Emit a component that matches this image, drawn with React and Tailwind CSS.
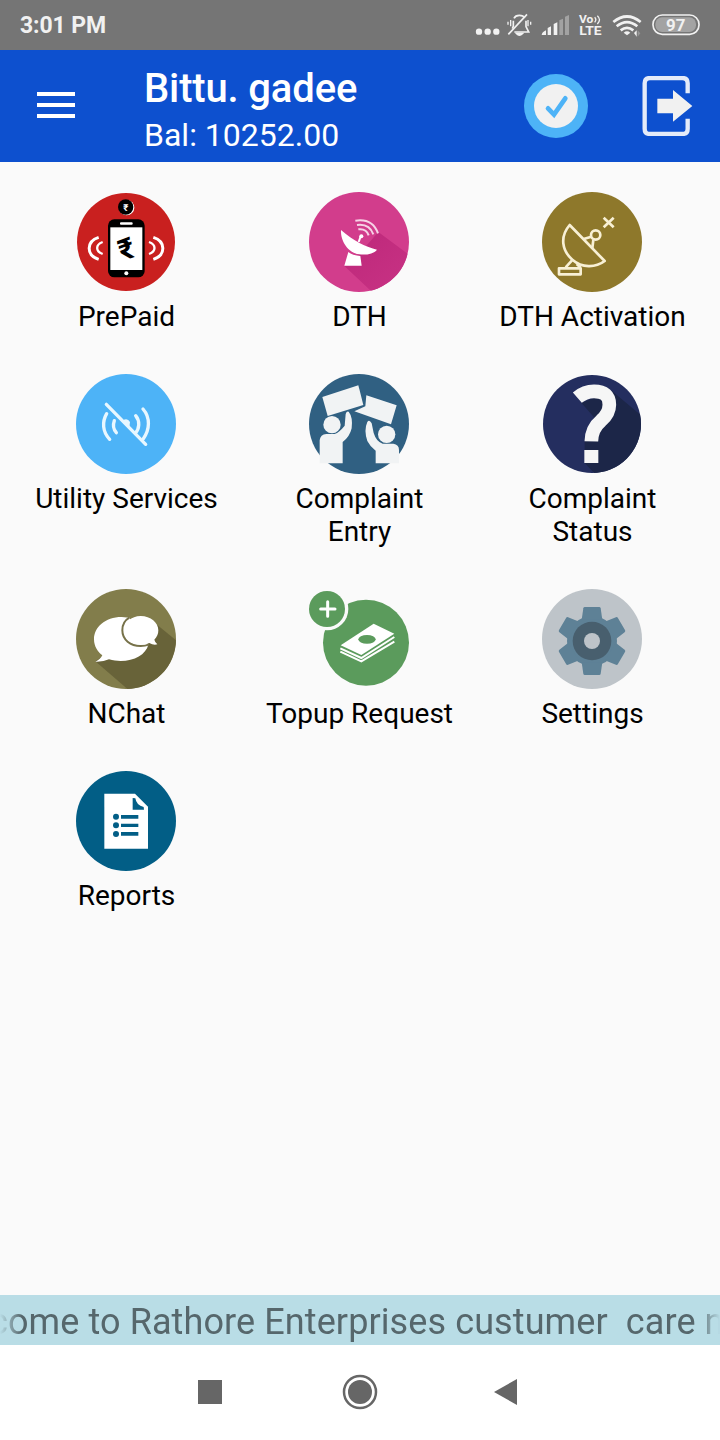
function PrepaidIcon() {
  return (
    <svg viewBox="30 30 300 300" className="size-[100px]">
      <circle cx="180" cy="180" r="147" fill="#c9201f" />
      <circle cx="182" cy="77" r="23" fill="#fff" />
      <circle cx="179" cy="75" r="23" fill="#000" />
      <text x="179" y="86" textAnchor="middle" fontSize="29" fontWeight="700" fill="#fff" className="font-['Roboto',sans-serif]">₹</text>
      <rect x="126" y="112" width="110" height="174" rx="19" fill="#000" />
      <rect x="162" y="121" width="38" height="7" rx="3" fill="#fff" />
      <rect x="133" y="136" width="96" height="128" fill="#fff" />
      <circle cx="181" cy="274" r="6" fill="#fff" />
      <text x="181" y="232" textAnchor="middle" fontSize="88" fontWeight="700" fill="#000" transform="rotate(-20 180 200)" className="font-['Roboto',sans-serif]">₹</text>
      <g fill="none" stroke="#fff">
        <path d="M98 166C60 178 60 220 98 232" strokeWidth="9" />
        <path d="M110 180C88 188 88 208 110 216" strokeWidth="7" />
        <path d="M262 166C300 178 300 220 262 232" strokeWidth="9" />
        <path d="M249 180C271 188 271 208 249 216" strokeWidth="7" />
      </g>
    </svg>
  );
}

function DthIcon() {
  return (
    <svg viewBox="30 30 300 300" className="size-[100px]">
      <defs>
        <clipPath id="dth-clip">
          <circle cx="180" cy="180" r="150" />
        </clipPath>
        <linearGradient id="dth-shade" x1="0" y1="0" x2="1" y2="1">
          <stop offset="0.2" stopColor="#bf2a7c" />
          <stop offset="1" stopColor="#c93385" />
        </linearGradient>
      </defs>
      <circle cx="180" cy="180" r="150" fill="#d23d8c" />
      <path d="M238 150L340 226V340H230L136 252L190 205Z" fill="url(#dth-shade)" clipPath="url(#dth-clip)" />
      <path d="M126 144C124 178 148 212 180 217C202 220 224 215 234 203C202 196 162 176 126 144Z" fill="#fff" />
      <path d="M148 210Q160 220 184 222L188 251H136Z" fill="#fff" />
      <path d="M179 180L186 160" stroke="#fff" strokeWidth="6" />
      <circle cx="187" cy="163" r="6" fill="#fff" />
      <g fill="none" stroke="#f6d3e6" strokeWidth="6">
        <path d="M169 116Q220 108 237 154" />
        <path d="M174 129Q211 124 223 157" />
        <path d="M178 142Q202 139 209 160" />
      </g>
    </svg>
  );
}

function DthActivationIcon() {
  return (
    <svg viewBox="30 30 300 300" className="size-[100px]">
      <circle cx="180" cy="180" r="150" fill="#8e782b" />
      <g fill="none" stroke="#f8f0d5" strokeWidth="8" strokeLinejoin="round">
        <path d="M113 129L218 237C190 258 150 258 121 233C91 207 82 165 113 129Z" />
        <path d="M155 171L178 164M184 174L181 198" />
        <circle cx="191" cy="159" r="14" />
        <path d="M120 235L101 256M134 246L146 257" />
        <rect x="81" y="259" width="65" height="18" />
        <path d="M215 107L245 136M245 107L215 136" />
      </g>
    </svg>
  );
}

function UtilityIcon() {
  return (
    <svg viewBox="30 30 300 300" className="size-[100px]">
      <circle cx="180" cy="180" r="150" fill="#4db3f7" />
      <g fill="none" stroke="#e8f7ff" strokeWidth="10" strokeLinecap="round">
        <path d="M121 121L239 241" />
        <path d="M122 149C108 173 109 203 131 226" />
        <path d="M145 170C140 184 142 196 151 206" />
        <path d="M231 135C254 161 251 198 232 224" />
        <path d="M209 155C223 172 220 194 208 208" />
      </g>
      <path d="M170 170Q184 160 192 174L190 190Z" fill="#e8f7ff" />
    </svg>
  );
}

function ComplaintEntryIcon() {
  return (
    <svg viewBox="30 30 300 300" className="size-[100px]">
      <circle cx="180" cy="180" r="150" fill="#306082" />
      <g fill="#f1f3f4">
        <path d="M70 99L178 64L193 123L86 156Z" />
        <path d="M202 94L293 124L276 181L166 142L199 127Z" />
        <circle cx="99" cy="182" r="26" />
        <path d="M62 298V229Q64 211 82 210H107Q121 205 137 185L140 150Q142 140 149 143Q162 159 158 193Q152 219 131 234V298Z" />
        <circle cx="263" cy="211" r="26" />
        <path d="M300 298V258Q300 241 283 239H251Q232 233 224 207L218 178Q211 165 205 174Q194 198 205 231Q214 249 230 260V298Z" />
      </g>
    </svg>
  );
}

function ComplaintStatusIcon() {
  return (
    <svg viewBox="30 30 300 300" className="size-[100px]">
      <defs>
        <clipPath id="status-clip">
          <circle cx="180" cy="180" r="147" />
        </clipPath>
      </defs>
      <circle cx="180" cy="180" r="147" fill="#242e5f" />
      <path d="M239 80L340 165V340H199L158 297V220L186 160L148 116Z" fill="#1c2648" clipPath="url(#status-clip)" />
      <path d="M136 101Q158 82 186 82Q232 82 232 122Q232 148 207 170Q179 193 178 232" fill="none" stroke="#f6f6f6" strokeWidth="41" />
      <rect x="157" y="258" width="42" height="39" fill="#f6f6f6" />
    </svg>
  );
}

function ChatIcon() {
  return (
    <svg viewBox="30 30 300 300" className="size-[100px]">
      <defs>
        <clipPath id="chat-clip">
          <circle cx="180" cy="180" r="150" />
        </clipPath>
      </defs>
      <circle cx="180" cy="180" r="150" fill="#827d4b" />
      <path d="M262 128L350 200V340H196L88 247L200 170Z" fill="#686339" clipPath="url(#chat-clip)" />
      <path d="M167 114C117 114 84 145 84 181C84 203 96 219 109 229Q104 240 88 248Q112 249 129 241C184 256 238 234 247 197L190 116Z" fill="#fff" />
      <path d="M190 116C176 124 169 138 169 154C169 182 193 201 224 201Q238 201 248 197" fill="none" stroke="#77724a" strokeWidth="6" />
      <path d="M224 111C196 111 174 131 174 154C174 178 195 197 224 197Q239 197 250 192Q262 199 274 196Q267 190 265 182C273 173 277 166 277 154C277 131 254 111 224 111Z" fill="#fff" />
    </svg>
  );
}

function TopupIcon() {
  return (
    <svg viewBox="30 30 300 300" className="size-[100px]">
      <circle cx="201" cy="191" r="129" fill="#5b9b5c" />
      <circle cx="84" cy="90" r="64" fill="#fafafa" />
      <circle cx="84" cy="90" r="54" fill="#5b9b5c" />
      <path d="M65 90H108M86 68V112" stroke="#fff" strokeWidth="9" strokeLinecap="round" />
      <path d="M125 199L224 134L286 164L187 228Z" fill="#fff" />
      <g fill="none" stroke="#fff" strokeWidth="6">
        <path d="M124 208L187 237L286 174" />
        <path d="M124 218L187 247L286 188" />
      </g>
      <ellipse cx="204" cy="181" rx="26" ry="13" fill="#5b9b5c" />
    </svg>
  );
}

const teeth = [0, 60, 120, 180, 240, 300];

function SettingsIcon() {
  return (
    <svg viewBox="30 30 300 300" className="size-[100px]">
      <circle cx="180" cy="180" r="150" fill="#bec4c9" />
      <g fill="#5e8196">
        <circle cx="180" cy="186" r="75" />
        {teeth.map((deg) => (
          <path key={deg} d="M158 84H202Q205 84 206 88L211 122H149L154 88Q155 84 158 84Z" transform={`rotate(${deg} 180 186)`} />
        ))}
      </g>
      <circle cx="180" cy="186" r="58" fill="#485f6e" />
      <circle cx="180" cy="186" r="24" fill="#bec4c9" />
    </svg>
  );
}

function ReportsIcon() {
  return (
    <svg viewBox="30 30 300 300" className="size-[100px]">
      <circle cx="180" cy="180" r="150" fill="#025e86" />
      <path d="M115 98H207L246 137V263H115Z" fill="#fff" />
      <path d="M200 111L208 112Q211 133 233 138L234 146H200Z" fill="#025e86" />
      <g fill="#025e86">
        <circle cx="150" cy="167" r="9" />
        <circle cx="150" cy="193" r="9" />
        <circle cx="150" cy="219" r="9" />
        <path d="M165 162H217V173H165ZM165 188H217V198H165ZM165 213H217V224H165Z" />
      </g>
    </svg>
  );
}

const menu = [
  { label: "PrePaid", Icon: PrepaidIcon },
  { label: "DTH", Icon: DthIcon },
  { label: "DTH Activation", Icon: DthActivationIcon },
  { label: "Utility Services", Icon: UtilityIcon },
  { label: "Complaint Entry", Icon: ComplaintEntryIcon },
  { label: "Complaint Status", Icon: ComplaintStatusIcon },
  { label: "NChat", Icon: ChatIcon },
  { label: "Topup Request", Icon: TopupIcon },
  { label: "Settings", Icon: SettingsIcon },
  { label: "Reports", Icon: ReportsIcon },
];

function StatusBar() {
  return (
    <div className="h-[50px] shrink-0 bg-[#757575] flex items-center justify-between pl-5 pr-[15px]">
      <span className="text-[23px] leading-[28px] mt-0.5 font-bold tracking-[-0.1px] text-[#f1f1f1]">3:01 PM</span>

      <div className="flex">
        {/* More */}
        <svg viewBox="39 0 90 150" className="w-[30px] h-[50px]" fill="#f1f1f1">
          <circle cx="57" cy="95" r="9.5" />
          <circle cx="83" cy="95" r="9.5" />
          <circle cx="109" cy="95" r="9.5" />
        </svg>

        {/* Muted */}
        <svg viewBox="129 0 96 150" className="w-8 h-[50px]" fill="none" stroke="#f1f1f1" strokeWidth="5">
          <path d="M162 55Q166 46 178 46Q190 46 194 54M198 62V80L206 96H163M157 86L160 78V62" />
          <path d="M145 103L201 43" />
          <path d="M170 101Q178 110 187 101Z" fill="#f1f1f1" />
          <path d="M152 60V79M204 60V79M144 65V74M212 65V74" strokeWidth="4" />
        </svg>

        {/* Signal */}
        <svg viewBox="225 0 120 150" className="w-10 h-[50px]" fill="#f1f1f1">
          <path d="M245 105Q246 96 258 91V105ZM263 84L273 79V105H263ZM281 72L292 67V105H281Z" />
          <path d="M298 61L309 56V105H298ZM315 50L327 45V105H315Z" fill="#a2a2a2" />
        </svg>

        {/* VoLTE */}
        <svg viewBox="345 0 90 150" className="w-[30px] h-[50px]" fill="#f1f1f1">
          <text x="357" y="70" fontSize="33" fontWeight="700" textLength="43" lengthAdjust="spacingAndGlyphs">Vo</text>
          <text x="358" y="106" fontSize="36" fontWeight="700" textLength="67" lengthAdjust="spacingAndGlyphs">LTE</text>
          <path d="M404 52Q411 59 404 67M412 47Q425 59 412 72" fill="none" stroke="#f1f1f1" strokeWidth="4" />
        </svg>

        {/* Wifi */}
        <svg viewBox="435 0 126 150" className="w-[42px] h-[50px]" fill="none" stroke="#f1f1f1" strokeWidth="8">
          <path d="M460 66Q501 33 542 66" />
          <path d="M470 79Q501 54 532 79" />
          <path d="M482 91Q501 76 520 91" />
          <path d="M491 98Q501 90 511 98L501 106Z" fill="#f1f1f1" stroke="none" />
          <path d="M522 99L530 91V110Z" fill="#f1f1f1" stroke="none" />
          <path d="M533 91L541 100L533 110Z" fill="#969696" stroke="none" />
        </svg>

        {/* Battery */}
        <svg viewBox="561 0 174 150" className="w-[58px] h-[50px]">
          <rect x="579" y="45" width="138" height="58" rx="28" fill="none" stroke="#f1f1f1" strokeWidth="5" />
          <rect x="586" y="52" width="122" height="44" rx="20" fill="#a3a3a3" />
          <text x="647" y="92" textAnchor="middle" fontSize="50" fontWeight="700" fill="#f1f1f1" textLength="58" lengthAdjust="spacingAndGlyphs">97</text>
        </svg>
      </div>
    </div>
  );
}

function Header() {
  return (
    <header className="h-28 shrink-0 bg-[#0d50cf] text-white flex items-center pl-[37px] pr-[27px]">
      <button className="flex flex-col gap-[7px] w-[38px] mb-0.5">
        <span className="h-1 w-full bg-white" />
        <span className="h-1 w-full bg-white" />
        <span className="h-1 w-full bg-white" />
      </button>

      <div className="ml-[69px] mt-[7px] flex-1">
        <h1 className="text-[40px] leading-[47px] font-medium tracking-[-0.15px]">Bittu. gadee</h1>
        <p className="text-[32px] leading-[39px] mt-1">Bal: 10252.00</p>
      </div>

      {/* Verified */}
      <svg viewBox="192 222 192 192" className="size-16">
        <circle cx="288" cy="318" r="96" fill="#4db3f7" />
        <circle cx="288" cy="318" r="66" fill="#f1f1f1" />
        <path d="M264 325L282 344L316 295" fill="none" stroke="#4db3f7" strokeWidth="14" strokeLinecap="round" />
      </svg>

      {/* Logout */}
      <svg viewBox="546 228 153 180" className="w-[51px] h-[60px] ml-[54px]">
        <path d="M683 280V250Q683 234 667 234H570Q554 234 554 250V386Q554 402 570 402H667Q683 402 683 386V356" fill="none" stroke="#e4ebf9" strokeWidth="13" />
        <path d="M592 296H639V270L697 318L639 365V340H592Z" fill="#f1f1f1" />
      </svg>
    </header>
  );
}

function App() {
  return (
    <div className="w-[720px] h-[1440px] overflow-hidden flex flex-col bg-[#fafafa] font-['Roboto',sans-serif]">
      <StatusBar />
      <Header />

      <main className="flex-1 pt-[30px] pl-[9px] pr-3">
        <div className="grid grid-cols-3 gap-y-[41px]">
          {menu.map(({ label, Icon }) => (
            <div key={label} className="flex flex-col items-center gap-2">
              <Icon />
              <p className="w-[196px] pl-0.5 text-center text-[28px] leading-[33px] text-black">{label}</p>
            </div>
          ))}
        </div>
      </main>

      {/* Scrolling notice, faded at both ends */}
      <div className="h-[50px] shrink-0 bg-[#b9dde6] overflow-hidden">
        <p className="whitespace-pre text-[36px] leading-[50px] mt-0.5 text-[#56676c] tracking-[0.1px] -indent-[11px] mask-x-from-97% mask-x-to-100%">
          come to Rathore Enterprises custumer  care n
        </p>
      </div>

      {/* System nav */}
      <nav className="h-[95px] shrink-0 bg-white flex items-center justify-between pl-[198px] pr-[202px] pb-px">
        <span className="size-6 bg-[#666]" />
        <svg viewBox="0 0 36 36" className="size-9 ml-[3px]">
          <circle cx="18" cy="18" r="16" fill="none" stroke="#666" strokeWidth="2.5" />
          <circle cx="18" cy="18" r="12" fill="#666" />
        </svg>
        <svg viewBox="0 0 24 28" className="w-6 h-7">
          <path d="M0 14L23 1V27Z" fill="#666" />
        </svg>
      </nav>
    </div>
  );
}

export default App;
